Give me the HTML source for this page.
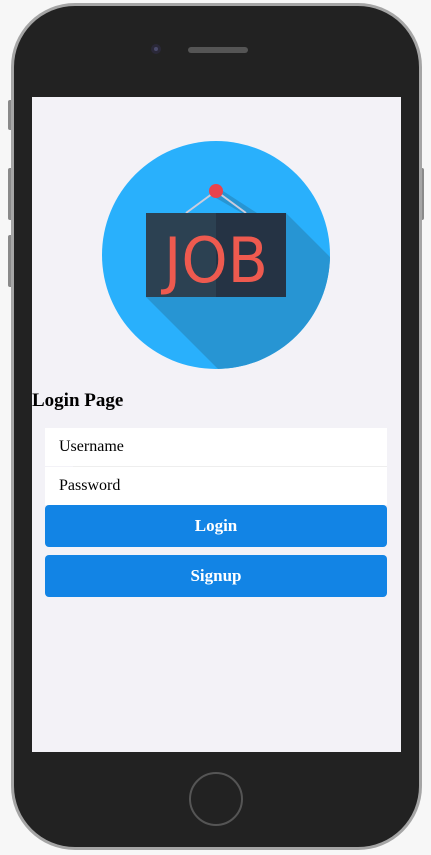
<!DOCTYPE html>
<html><head><style>
body{margin:0;width:431px;height:855px;background:#f7f7f7;position:relative;overflow:hidden;font-family:"Liberation Serif",serif}
.btnside{position:absolute;background:#8a8a8a;border-radius:2px}
.outer{position:absolute;left:11px;top:3px;width:411px;height:847px;border-radius:64px;background:#a5a5a5}
.inner{position:absolute;left:14px;top:6px;width:405px;height:841px;border-radius:61px;background:#222}
.screen{position:absolute;left:32px;top:97px;width:369px;height:655px;background:#f3f2f7}
.field{position:absolute;left:13px;width:342px;height:38px;background:#fff;font-size:16px;line-height:38px}
.btn{position:absolute;left:13px;width:342px;height:42px;background:#1284e5;border-radius:4px;color:#fff;font-weight:bold;font-size:17px;text-align:center;line-height:42px}
</style></head><body>
<div class="btnside" style="left:8px;top:100px;width:5px;height:30px"></div>
<div class="btnside" style="left:8px;top:168px;width:5px;height:52px"></div>
<div class="btnside" style="left:8px;top:235px;width:5px;height:52px"></div>
<div class="btnside" style="left:419px;top:168px;width:5px;height:52px"></div>
<div class="outer"></div>
<div class="inner"></div>
<div style="position:absolute;left:151px;top:44px;width:10px;height:10px;border-radius:50%;background:#2a2838"></div>
<div style="position:absolute;left:154px;top:47px;width:4px;height:4px;border-radius:50%;background:#4a4a6a"></div>
<div style="position:absolute;left:188px;top:47px;width:60px;height:6px;border-radius:3px;background:#555"></div>
<div style="position:absolute;left:189px;top:772px;width:54px;height:54px;border-radius:50%;border:2px solid #555;box-sizing:border-box"></div>
<div class="screen">
<svg style="position:absolute;left:0;top:0" width="369" height="300">
<defs><clipPath id="c"><circle cx="184" cy="158" r="114"/></clipPath></defs>
<circle cx="184" cy="158" r="114" fill="#29b0fc"/>
<g clip-path="url(#c)" fill="#2795d3">
<polygon points="254,116 454,316 454,400 314,400 114,200"/>
<polygon points="184,87 191,94 225,116 210,116 184,101"/>
</g>
<line x1="184" y1="94" x2="154" y2="116" stroke="#ccd" stroke-width="2"/>
<line x1="184" y1="94" x2="214" y2="116" stroke="#ccd" stroke-width="2"/>
<rect x="114" y="116" width="140" height="84" fill="#2c4152"/>
<rect x="184" y="116" width="70" height="84" fill="#253344"/>
<circle cx="184" cy="94" r="7" fill="#e8434d"/>
<text x="184" y="185" text-anchor="middle" font-family="DejaVu Sans,sans-serif" font-size="62" fill="#ee5a4f" textLength="104" lengthAdjust="spacingAndGlyphs" style="font-weight:normal">JOB</text>
</svg>
<div style="position:absolute;left:0;top:293px;font-size:19px;font-weight:bold">Login Page</div>
<div class="field" style="top:331px"><span style="margin-left:14px">Username</span></div>
<div style="position:absolute;left:41px;top:369px;width:314px;height:1px;background:#eee"></div>
<div class="field" style="top:370px"><span style="margin-left:14px">Password</span></div>
<div class="btn" style="top:408px">Login</div>
<div class="btn" style="top:458px">Signup</div>
</div>
</body></html>
